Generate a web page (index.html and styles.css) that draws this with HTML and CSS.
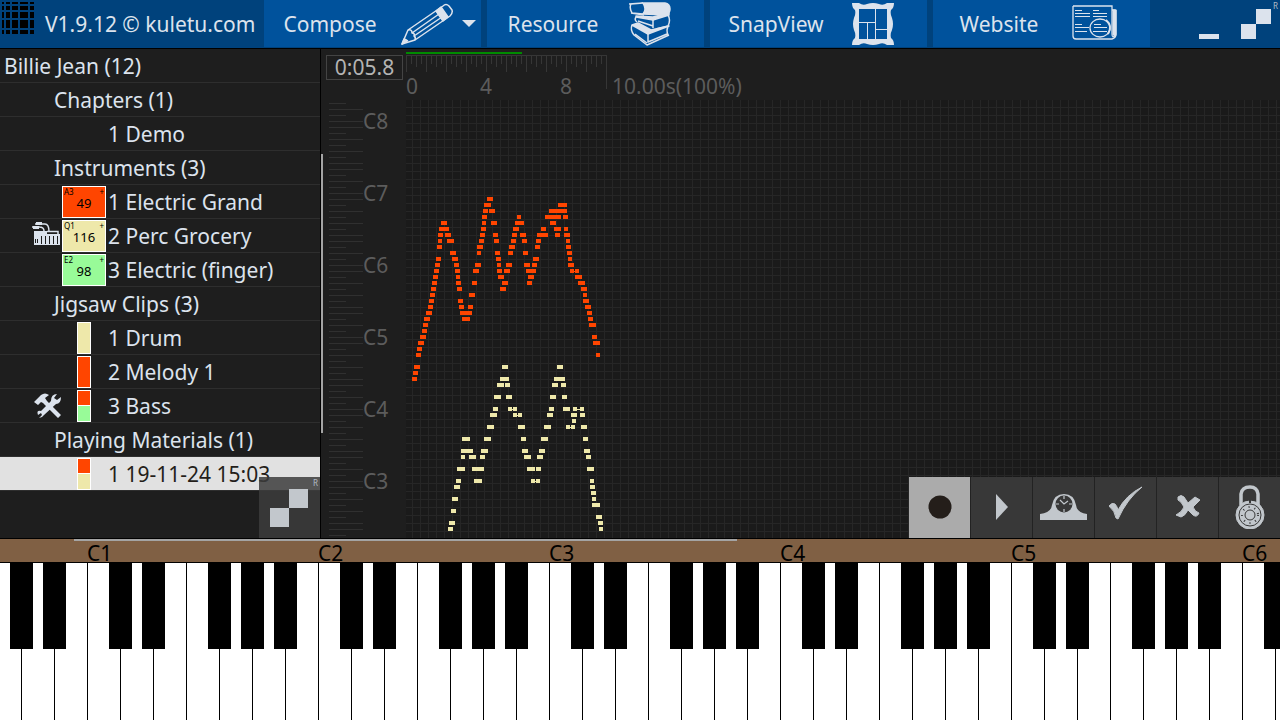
FILE: index.html
```
<!DOCTYPE html>
<html lang="en">
<head>
  <title>Kuletu</title>
  <meta charset="utf-8" />
  <link rel="stylesheet" href="styles.css">
</head>
<body>
  <header class="topbar">
    <div class="brand">
      <svg class="logo" width="32" height="32" viewBox="0 0 32 32" shape-rendering="crispEdges">
        <rect width="32" height="32" fill="#000" />
        <path d="M3 0V32M9 0V32M17 0V32M27 0V32M0 3H32M0 9H32M0 17H32M0 27H32" stroke="#00427c" stroke-width="2" />
      </svg>
      <span>V1.9.12 © kuletu.com</span>
    </div>
    <nav class="menu">
      <button class="menu-button">
        <span class="menu-label">Compose</span>
        <span class="menu-icon">
          <svg width="54" height="44" viewBox="0 0 54 44" fill="none" stroke="#dce3ed" stroke-width="1.5" stroke-linejoin="round">
            <path d="M2 42L8 28L43 4Q46 1 49 4L52 8Q53 11 50 14L15 38Z" />
            <path d="M2 42L4 37L7 39Z M36 9L41 5L48 15L43 19Z" fill="#dce3ed" />
            <path d="M8 28Q12 27 12 31Q15 31 14 34Q16 35 15 38M12 31L39 12M14 34L42 15M5 37L8 39" />
          </svg>
        </span>
        <svg class="caret" width="14" height="7" viewBox="0 0 14 7"><path d="M0 0H14L7 7Z" fill="#dce3ed" /></svg>
      </button>
      <button class="menu-button">
        <span class="menu-label">Resource</span>
        <span class="menu-icon">
          <svg width="42" height="44" viewBox="0 0 42 44" fill="none" stroke="#dce3ed" stroke-width="1.5" stroke-linejoin="round">
            <path d="M14 1L36 1Q41 2 41 7Q41 11 37 13L14 12Q18 7 14 1Z" fill="#dce3ed" />
            <path d="M14 1L2 2Q0 6 3 11L14 12M0 2L14 1M2 11L15 13" />
            <path d="M7 14L24 15L40 11L40 13L24 18L7 15Z" fill="#dce3ed" />
            <path d="M7 15Q5 18 8 20M24 18V26M39 13Q42 18 39 24L27 27M9 19L24 24" />
            <path d="M3 23L9 21L22 28L40 24L19 32Z" fill="#dce3ed" />
            <path d="M3 23Q1 28 5 33L18 43L40 33M19 31V40L38 32M39 25Q37 28 39 33M6 32L18 41" />
          </svg>
        </span>
      </button>
      <button class="menu-button">
        <span class="menu-label">SnapView</span>
        <span class="menu-icon">
          <svg width="42" height="42" viewBox="0 0 42 42">
            <path d="M0 0H7Q11 3 15 1Q21 -1 27 1Q31 3 35 0H42Q42 5 39 7Q38 11 40 15Q42 21 40 27Q38 31 39 35Q42 37 42 42H35Q31 39 27 41Q21 43 15 41Q11 39 7 42H0Q0 37 3 35Q4 31 2 27Q0 21 2 15Q4 11 3 7Q0 5 0 0Z" fill="#dce3ed" />
            <rect x="7" y="6" width="28" height="30" fill="#00529c" />
            <path d="M23.5 6V36M7 19.5H23M15.5 19V36M23 26.5H35" stroke="#dce3ed" />
          </svg>
        </span>
      </button>
      <button class="menu-button">
        <span class="menu-label">Website</span>
        <span class="menu-icon">
          <svg class="news" width="45" height="36" viewBox="0 0 45 36" fill="none" stroke="#dce3ed">
            <path d="M1 1H40V29Q40 34 43 30V5H40M1 1V31Q1 34 4 34H40Q44 33 44 29V5" stroke-width="1.3" />
            <rect x="41" y="5" width="3" height="25" fill="#dce3ed" />
            <path d="M3 5.5H10M3 8.5H18M3 11.5H18M21 5.5H27M21 8.5H35M21 11.5H35M3 19.5H10M3 22.5H17M3 26.5H15M22 19.5H29M22 22.5H35M21 26.5H35" />
            <ellipse cx="28" cy="23" rx="10" ry="9" stroke-width="1.3" />
            <path d="M34 15Q41 21 36 29" stroke-width="2" />
          </svg>
        </span>
      </button>
    </nav>
    <div class="window-buttons">
      <button class="minimize" aria-label="Minimize"></button>
      <button class="restore" aria-label="Restore">
        <svg width="31" height="31" viewBox="0 0 31 31" fill="#dce3ed"><path d="M15 0H30V15H15ZM0 15H15V30H0Z" /></svg>
        <span class="corner">R</span>
      </button>
    </div>
  </header>

  <main class="workspace">
    <aside class="sidebar">
      <ul class="tree">
        <li class="row level-0">Billie Jean (12)</li>
        <li class="row level-1">Chapters (1)</li>
        <li class="row level-2">1 Demo</li>
        <li class="row level-1">Instruments (3)</li>
        <li class="row level-2"><span class="marks"><span class="tone red"><small>A3</small><small>+</small><b>49</b></span></span>1 Electric Grand</li>
        <li class="row level-2">
          <span class="marks">
            <svg class="device" width="30" height="24" viewBox="0 0 30 24">
              <path d="M2 9H15V12H28V23H2Z" fill="#dce3ed" />
              <path d="M0 5H8M3 2H13Q17 2 17 10M7 5Q12 5 12 9M15 9.5H26V12" fill="none" stroke="#dce3ed" stroke-width="1.5" />
              <path d="M1 4H7V7H1ZM4 0H10V3H4Z" fill="#dce3ed" />
              <path d="M9.5 14V22M13.5 14V22M17.5 14V22M21.5 14V22M25.5 14V22M3.5 17V21M5.5 17V21" stroke="#1e1e1e" />
            </svg>
            <span class="tone sand"><small>Q1</small><small>+</small><b>116</b></span>
          </span>2 Perc Grocery
        </li>
        <li class="row level-2"><span class="marks"><span class="tone green"><small>E2</small><small>+</small><b>98</b></span></span>3 Electric (finger)</li>
        <li class="row level-1">Jigsaw Clips (3)</li>
        <li class="row level-2"><span class="marks"><span class="clip"><i class="sand"></i></span></span>1 Drum</li>
        <li class="row level-2"><span class="marks"><span class="clip"><i class="red"></i></span></span>2 Melody 1</li>
        <li class="row level-2">
          <span class="marks">
            <svg width="28" height="26" viewBox="0 0 28 26" fill="#dce3ed">
              <path d="M0 9L7 2Q11 -1 15 2L11 5L13 8L27 22L24 25L9 10L7 9L4 12Z" />
              <path d="M5 25Q8 25 10 22L22 11Q27 11 27 4L23 7L20 5L23 1Q17 1 17 8L7 18Q2 17 4 22L7 20L8 22Z" />
            </svg>
            <span class="clip"><i class="red"></i><i class="green"></i></span>
          </span>3 Bass
        </li>
        <li class="row level-1">Playing Materials (1)</li>
        <li class="row level-2 selected"><span class="marks"><span class="clip"><i class="red"></i><i class="sand"></i></span></span>1 19-11-24 15:03</li>
      </ul>
      <button class="sidebar-restore" aria-label="Restore list">
        <svg width="38" height="38" viewBox="0 0 38 38" fill="#c2c7cc"><path d="M19 0H38V19H19ZM0 19H19V38H0Z" /></svg>
        <span class="corner">R</span>
      </button>
    </aside>

    <section class="score">
      <div class="timeline">
        <output class="clock">0:05.8</output>
        <div class="ruler">
          <div class="progress"></div>
          <svg id="ticks" class="ticks" width="201" height="35" shape-rendering="crispEdges"></svg>
          <div class="seconds"><span>0</span><span>4</span><span>8</span></div>
        </div>
        <span class="duration">10.00s(100%)</span>
      </div>
      <div class="roll">
        <div class="pitch">
          <svg id="pitchLines" width="34" height="438" shape-rendering="crispEdges"></svg>
          <div class="octaves"><span>C8</span><span>C7</span><span>C6</span><span>C5</span><span>C4</span><span>C3</span></div>
        </div>
        <div class="grid">
          <svg id="notes" width="200" height="438" shape-rendering="crispEdges"></svg>
        </div>
      </div>
      <div class="sidebar-thumb"></div>
      <div class="tools">
        <button class="tool active" aria-label="Record"><svg width="24" height="24" viewBox="0 0 24 24"><circle cx="12" cy="12" r="11.5" fill="#241e1a" /></svg></button>
        <button class="tool" aria-label="Play"><svg width="12" height="26" viewBox="0 0 12 26"><path d="M0 0L12 13L0 26Z" fill="#c2c7cc" /></svg></button>
        <button class="tool" aria-label="Metronome">
          <svg width="48" height="28" viewBox="0 0 48 28">
            <path d="M0 27V21Q11 20 12 12Q14 1 24 1Q34 1 36 12Q37 20 47 21V27Z" fill="#c2c7cc" />
            <circle cx="24" cy="11" r="8.5" fill="#383838" />
            <path d="M24 3V6M24 16V19M16 11H19M29 11H32M20 7L24 11L28 8" fill="none" stroke="#c2c7cc" stroke-width="1.2" />
          </svg>
        </button>
        <button class="tool" aria-label="Accept"><svg class="lifted" width="34" height="34" viewBox="0 0 34 34"><path d="M33 1Q18 13 9 33L7 32Q6 25 0 20Q3 16 6 18Q8 20 9 24Q17 9 33 1Z" fill="#c2c7cc" stroke="#c2c7cc" /></svg></button>
        <button class="tool" aria-label="Discard"><svg width="24" height="24" viewBox="0 0 24 24"><path d="M2 2Q5 -1 8 2L12 8L19 2L24 5L17 12Q19 17 23 18Q21 23 17 20L12 15Q9 21 5 22L0 20Q6 17 8 12Q5 6 2 5Z" fill="#c2c7cc" stroke="#c2c7cc" /></svg></button>
        <button class="tool" aria-label="Lock">
          <svg width="30" height="44" viewBox="0 0 30 44" fill="none" stroke="#c2c7cc">
            <path d="M6 20V9Q7 2 15 2Q22 2 23 9V20" stroke-width="3.5" />
            <circle cx="15" cy="30" r="14" fill="#c2c7cc" />
            <circle cx="15" cy="30" r="11" stroke="#383838" />
            <circle cx="15" cy="30" r="8" stroke="#383838" stroke-width="2" stroke-dasharray="1 5" />
            <circle cx="15" cy="30" r="5" stroke="#383838" />
            <path d="M15 15V18" stroke="#383838" stroke-width="2" />
          </svg>
        </button>
      </div>
    </section>
  </main>

  <footer class="piano">
    <div class="key-names">
      <div class="key-thumb"></div>
      <span>C1</span><span>C2</span><span>C3</span><span>C4</span><span>C5</span><span>C6</span>
    </div>
    <div id="keys" class="keys"></div>
  </footer>
  <script src="script.js"></script>
</body>
</html>
```

FILE: styles.css
```
* {
  box-sizing: border-box;
}

body {
  display: flex;
  flex-direction: column;
  height: 100vh;
  margin: 0;
  overflow: hidden;
  background: #1e1e1e;
  color: #dce3ed;
  font: 21px/32px "Noto Sans", "Open Sans", sans-serif;
}

button {
  padding: 0;
  border: 0;
  background: none;
  color: inherit;
  font: inherit;
}

svg {
  display: block;
  flex: none;
}

/* top bar */
.topbar {
  display: flex;
  flex: none;
  height: 49px;
  background: #00427c;
  border-bottom: 1px solid #000;
}

.brand {
  display: flex;
  align-items: center;
  gap: 11px;
  width: 264px;
  padding-left: 2px;
  white-space: nowrap;
}

.logo {
  align-self: flex-start;
  margin-top: 2px;
}

.menu {
  display: flex;
  gap: 6px;
}

.menu-button {
  display: flex;
  align-items: center;
  width: 217px;
  height: 47px;
  background: #00529c;
}

.menu-label {
  width: 132px;
  text-align: center;
}

.menu-icon {
  display: flex;
  justify-content: center;
  width: 62px;
}

.caret {
  margin-left: 4px;
}

.news {
  margin: 0 4px 2px 0;
}

.window-buttons {
  display: flex;
  flex: 1;
  justify-content: flex-end;
  gap: 22px;
}

.minimize {
  align-self: flex-end;
  width: 20px;
  height: 5px;
  margin-bottom: 9px;
  background: #dce3ed;
}

.restore {
  position: relative;
  width: 39px;
}

.corner {
  position: absolute;
  top: 0;
  right: 2px;
  color: #b4bcc6;
  font-size: 8px;
  line-height: 11px;
}

/* project tree */
.workspace {
  display: flex;
  flex: 1;
  min-height: 0;
}

.sidebar {
  position: relative;
  width: 321px;
  border-right: 1px solid #000;
}

.tree {
  margin: 0;
  padding: 0;
  list-style: none;
}

.row {
  display: flex;
  align-items: center;
  height: 34px;
  border-bottom: 1px solid #2e2e2e;
  white-space: nowrap;
}

.level-0 {
  padding-left: 4px;
}

.level-1 {
  padding-left: 54px;
}

.level-2 {
  padding-left: 108px;
}

.selected {
  background: #e1e1e1;
  color: #241e1a;
}

.marks {
  display: flex;
  align-items: center;
  justify-content: flex-end;
  width: 108px;
  margin-left: -108px;
  padding-right: 2px;
}

.device {
  margin-bottom: 4px;
}

.tone {
  display: flex;
  flex-wrap: wrap;
  align-content: flex-start;
  justify-content: space-between;
  width: 44px;
  height: 32px;
  padding: 0 1px;
  border: 1px solid #fff;
  color: #000;
}

.tone small {
  font-size: 8px;
  line-height: 9px;
}

.tone b {
  width: 100%;
  font-size: 13px;
  font-weight: normal;
  line-height: 14px;
  text-align: center;
}

.clip {
  display: flex;
  flex-direction: column;
  gap: 1px;
  width: 14px;
  height: 32px;
  margin: 0 15px;
  border: 1px solid #fff;
  background: #fff;
}

.clip i {
  flex: 1;
}

.red {
  background: #ff4500;
}

.sand {
  background: #eee8aa;
}

.green {
  background: #98fb98;
}

.sidebar-restore {
  position: absolute;
  right: 0;
  bottom: 0;
  width: 61px;
  height: 61px;
  padding: 1px 0 0 11px;
  background: rgba(60, 60, 60, 0.85);
}

/* score */
.score {
  position: relative;
  display: flex;
  flex: 1;
  flex-direction: column;
  min-width: 0;
}

.timeline {
  display: flex;
  height: 51px;
  padding-left: 5px;
  color: #5c5c5c;
}

.clock {
  width: 77px;
  height: 25px;
  margin: 6px 3px 0 0;
  border: 1px solid #444;
  color: #b4b4b4;
  line-height: 23px;
  text-align: center;
}

.ruler {
  width: 201px;
  padding-top: 3px;
}

.progress {
  width: 116px;
  height: 2px;
  background: #008a00;
}

.ticks {
  margin-top: 1px;
}

.seconds {
  display: flex;
  margin-top: -14px;
  line-height: 20px;
}

.seconds span {
  flex: 0 0 80px;
  text-align: center;
}

/* zero sits at the start of the ruler, the others are centred on their tick */
.seconds span:first-child {
  flex-basis: 40px;
  text-align: left;
}

.duration {
  padding: 21px 0 0 5px;
}

.roll {
  display: flex;
  flex: 1;
  min-height: 0;
}

.pitch {
  display: flex;
  width: 85px;
  padding-left: 8px;
  overflow: hidden;
}

.octaves {
  display: flex;
  flex-direction: column;
  gap: 40px;
  padding-top: 5px;
  color: #5c5c5c;
}

.grid {
  flex: 1;
  min-width: 0;
  overflow: hidden;
  background:
    linear-gradient(90deg, #262626 1px, transparent 1px) 6px 0 / 8px 8px,
    linear-gradient(#262626 1px, transparent 1px) 0 7px / 8px 8px,
    #1a1a1a;
}

.sidebar-thumb {
  position: absolute;
  top: 105px;
  left: 0;
  width: 2px;
  height: 279px;
  background: #a4a4a4;
}

.tools {
  position: absolute;
  right: 0;
  bottom: 0;
  display: flex;
  gap: 1px;
  background: rgba(36, 36, 36, 0.9);
}

.tool {
  display: flex;
  align-items: center;
  justify-content: center;
  width: 61px;
  height: 61px;
  padding-bottom: 2px;
  background: rgba(60, 60, 60, 0.85);
}

.tool.active {
  background: #ababab;
}

.lifted {
  margin-bottom: 8px;
}

/* keyboard */
.piano {
  flex: none;
  height: 182px;
  border-top: 1px solid #000;
}

.key-names {
  position: relative;
  display: flex;
  height: 24px;
  padding-left: 87px;
  border-bottom: 1px solid #000;
  background: #806044;
  color: #000;
  line-height: 28px;
}

.key-names span {
  flex: 0 0 231px;
}

.key-names span:last-child {
  flex: 1 1 0;
}

.key-thumb {
  position: absolute;
  top: 0;
  left: 74px;
  width: 663px;
  height: 2px;
  background: #a4a4a4;
}

.keys {
  display: flex;
  height: 157px;
  overflow: hidden;
  background: #fff;
}

.key {
  position: relative;
  flex: 0 0 33px;
  border-right: 1px solid #000;
  background: #fff;
}

.key:first-child {
  flex-basis: 22px;
}

.sharp::after {
  content: "";
  position: absolute;
  z-index: 1;
  top: 0;
  right: -12px;
  width: 23px;
  height: 86px;
  background: #000;
}
```

FILE: script.js
```
// every entry is [row, x, width, x, width, ...], one row is a semitone
const melody = [
  [0, 81, 6], [1, 78, 7, 152, 9], [2, 77, 5, 83, 6, 143, 18], [3, 76, 5, 111, 4, 139, 16, 157, 5],
  [4, 35, 6, 76, 4, 85, 6, 109, 9, 144, 6], [5, 33, 10, 75, 5, 107, 6, 135, 5, 148, 7, 158, 4],
  [6, 32, 5, 39, 6, 74, 5, 87, 5, 106, 5, 114, 6, 131, 11, 149, 5, 158, 6],
  [7, 32, 4, 41, 7, 73, 5, 88, 5, 105, 5, 116, 5, 130, 5, 160, 4],
  [8, 31, 5, 71, 6, 103, 6, 129, 5, 160, 5], [9, 44, 6, 71, 4, 89, 5, 102, 5, 117, 5, 161, 5],
  [10, 30, 5, 46, 6, 90, 5, 127, 6, 162, 4], [11, 29, 5, 48, 5, 69, 6, 91, 4, 100, 6, 118, 6, 126, 5, 162, 6],
  [12, 28, 5, 49, 5, 67, 6, 91, 5, 98, 6, 120, 10, 164, 4, 169, 4], [13, 27, 5, 50, 4, 92, 6, 122, 6, 169, 7],
  [14, 26, 5, 50, 5, 66, 5, 96, 6, 121, 5, 172, 7], [15, 25, 5, 51, 5, 94, 6, 175, 6],
  [16, 24, 5, 63, 6, 177, 4], [17, 23, 5, 52, 5, 177, 6], [18, 22, 5, 53, 5, 62, 5, 179, 6],
  [19, 20, 6, 54, 12, 181, 5], [20, 18, 6, 56, 8, 182, 5], [21, 17, 5, 183, 7], [22, 16, 5],
  [23, 14, 6, 186, 5], [24, 12, 6, 187, 7], [25, 11, 5], [26, 10, 5, 190, 4], [28, 8, 6], [29, 7, 5], [30, 6, 5]
];
const drum = [
  [28, 96, 6, 151, 6], [30, 94, 9, 148, 11], [31, 91, 7, 99, 5, 146, 6, 155, 5],
  [33, 88, 7, 100, 6, 144, 6, 156, 5], [35, 87, 5, 102, 4, 107, 4, 143, 5, 157, 7, 167, 4, 174, 4],
  [36, 84, 7, 107, 4, 112, 4, 141, 6, 165, 6, 174, 5], [37, 166, 4],
  [38, 81, 7, 112, 7, 138, 7, 160, 4, 165, 4, 175, 6], [40, 56, 8, 78, 7, 115, 5, 135, 7, 177, 5],
  [42, 55, 12, 75, 7, 116, 6, 133, 6, 178, 6], [43, 55, 4, 63, 7, 74, 5, 118, 7, 131, 6, 180, 5],
  [45, 51, 8, 66, 12, 121, 8, 130, 5, 181, 7], [47, 50, 5, 68, 8, 125, 4, 130, 4, 184, 4],
  [48, 48, 6, 184, 5], [49, 185, 5], [50, 46, 6, 186, 4], [51, 186, 8], [52, 45, 5],
  [53, 190, 6], [54, 43, 6, 192, 5], [55, 42, 5, 193, 4]
];
// thin joins between repeated notes
const ties = { melody: [[12, 168, 1]], drum: [[35, 106, 1], [35, 171, 3], [36, 111, 1], [38, 164, 1], [47, 129, 1]] };

function notePath(rows, joins) {
  let d = '';
  rows.forEach(([row, ...spans]) => {
    for (let i = 0; i < spans.length; i += 2) {
      d += `M${spans[i]} ${97 + row * 6}h${spans[i + 1]}v4h-${spans[i + 1]}z`;
    }
  });
  joins.forEach(([row, x, w]) => {
    d += `M${x} ${99 + row * 6}h${w}v1h-${w}z`;
  });
  return d;
}

document.getElementById('notes').innerHTML =
  `<path fill="#ff4500" d="${notePath(melody, ties.melody)}"/><path fill="#eee8aa" d="${notePath(drum, ties.drum)}"/>`;

// time ruler, a tick every quarter second
let ticks = 'M0 0h201v1h-201z';
for (let i = 0; i <= 40; i++) {
  const h = i === 40 ? 34 : i % 4 === 0 ? 17 : i % 2 === 0 ? 12 : 9;
  ticks += `M${i * 5} 0h1v${h}h-1z`;
}
document.getElementById('ticks').innerHTML = `<path fill="#363636" d="${ticks}"/>`;

// pitch ruler, short lines are the black keys
const blackKeys = [2, 4, 6, 9, 11];
let lines = '';
for (let i = -3; i < 70; i++) {
  const short = blackKeys.includes((i + 12) % 12);
  lines += `M0 ${21 + i * 6}h${short ? 17 : 34}v1h-${short ? 17 : 34}z`;
}
document.getElementById('pitchLines').innerHTML = `<path fill="#303030" d="${lines}"/>`;

// white keys from G0, true where a black key sits on the right edge
const sharps = [true, true, false, true, true, false, true];
const keys = document.getElementById('keys');
for (let i = 0; i < 60; i++) {
  const key = document.createElement('button');
  key.className = sharps[i % 7] ? 'key sharp' : 'key';
  key.setAttribute('aria-label', 'GABCDEF'[i % 7]);
  keys.appendChild(key);
}
```
